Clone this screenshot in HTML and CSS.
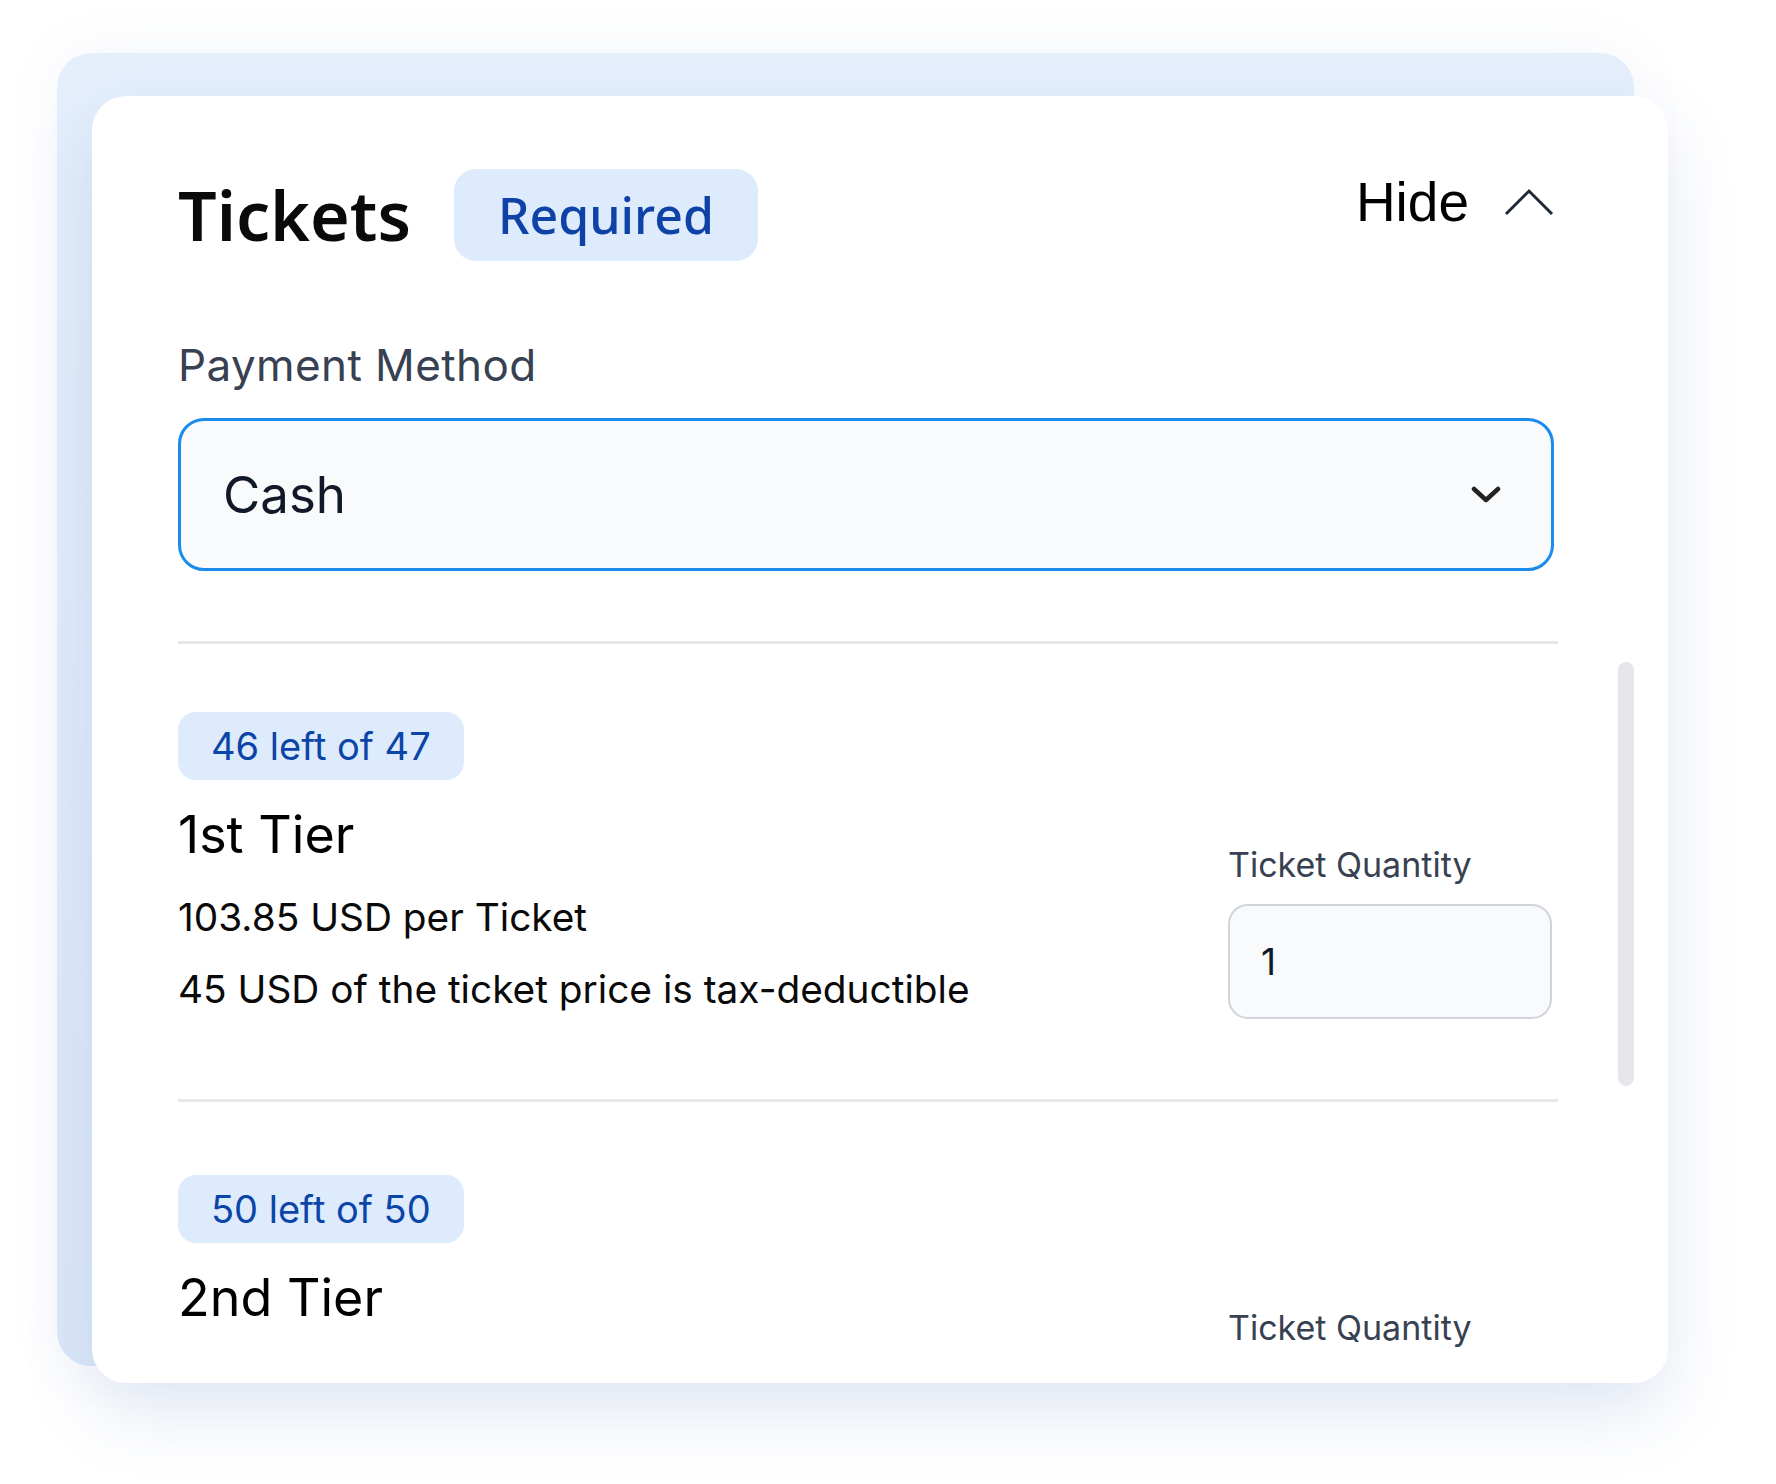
FILE: index.html
```html
<!DOCTYPE html>
<html lang="en">
<head>
<meta charset="utf-8">
<title>Tickets</title>
<link rel="stylesheet" href="styles.css">
</head>
<body>
<div class="stage">
  <div class="back-card">
    <section class="card">
      <header class="card-header">
        <div class="title-group">
          <h1 class="title">Tickets</h1>
          <span class="pill">Required</span>
        </div>
        <button class="hide-btn" type="button">
          <span>Hide</span>
          <svg class="chev-up" viewBox="0 0 50 28" width="50" height="28"><polyline points="2,26 25,3 48,26" fill="none" stroke="#1f2937" stroke-width="3"/></svg>
        </button>
      </header>

      <label class="field-label">Payment Method</label>
      <div class="select">
        <span class="select-value">Cash</span>
        <svg class="chev-down" viewBox="0 0 30 18" width="30" height="18"><polyline points="3,3 15,14 27,3" fill="none" stroke="#222" stroke-width="4.5" stroke-linecap="round" stroke-linejoin="round"/></svg>
      </div>

      <div class="divider"></div>

      <div class="tiers">
        <div class="tier">
          <div class="tier-info">
            <span class="badge">46 left of 47</span>
            <h2 class="tier-name">1st Tier</h2>
            <p class="tier-line">103.85 USD per Ticket</p>
            <p class="tier-line">45 USD of the ticket price is tax-deductible</p>
          </div>
          <div class="qty">
            <div class="qty-label">Ticket Quantity</div>
            <div class="qty-input">1</div>
          </div>
        </div>
        <div class="tier tier-next">
          <div class="tier-info">
            <span class="badge">50 left of 50</span>
            <h2 class="tier-name">2nd Tier</h2>
          </div>
          <div class="qty">
            <div class="qty-label">Ticket Quantity</div>
          </div>
        </div>
      </div>

      <div class="scroll-thumb"></div>
    </section>
  </div>
</div>
</body>
</html>
```

FILE: styles.css
```css
* { box-sizing: border-box; }

html, body {
  margin: 0;
  padding: 0;
  background: #ffffff;
}

body {
  width: 1776px;
  height: 1484px;
  overflow: hidden;
  font-family: "Inter", "Noto Sans", sans-serif;
}

.stage {
  padding: 53px 0 0 57px;
}

.back-card {
  width: 1577px;
  height: 1313px;
  border-radius: 34px;
  background: linear-gradient(180deg, #e5effc 0%, #dce8f8 100%);
  padding: 43px 0 0 35px;
  box-shadow: 0 0 60px rgba(60, 100, 180, 0.06);
}

.card {
  position: relative;
  width: 1576px;
  height: 1287px;
  background: #ffffff;
  border-radius: 34px;
  overflow: hidden;
  padding: 73px 114px 0 86px;
  box-shadow: 0 30px 70px rgba(50, 90, 170, 0.14);
}

.card-header {
  display: flex;
  justify-content: space-between;
  align-items: flex-start;
}

.title-group {
  display: flex;
  align-items: center;
  gap: 43px;
}

.title {
  margin: 0;
  font-family: "Noto Sans", sans-serif;
  font-weight: 600;
  font-size: 68px;
  line-height: 1;
  color: #0a0a0a;
}

.pill {
  display: inline-block;
  height: 92px;
  padding: 0 44px;
  border-radius: 22px;
  background: #deebfd;
  color: #0e42a6;
  font-family: "Noto Sans", sans-serif;
  font-weight: 500;
  font-size: 50px;
  line-height: 92px;
}

.hide-btn {
  margin-top: 7px;
  display: flex;
  align-items: center;
  gap: 35px;
  border: 0;
  padding: 0;
  background: transparent;
  font-family: "Liberation Sans", Arial, sans-serif;
  font-size: 55px;
  line-height: 52px;
  color: #000;
}

.chev-up { display: block; width: 50px; height: 28px; }

.field-label {
  display: block;
  margin-top: 78px;
  font-size: 44px;
  line-height: 53px;
  color: #374151;
  letter-spacing: 0.4px;
}

.select {
  margin-top: 26px;
  height: 153px;
  border: 3px solid #1b8cec;
  border-radius: 26px;
  background: #f9fafb;
  display: flex;
  align-items: center;
  justify-content: space-between;
  padding: 0 50px 0 42px;
}

.select-value {
  font-size: 51px;
  color: #111827;
  line-height: 1;
}

.chev-down { display: block; width: 30px; height: 18px; }

.divider {
  margin-top: 70px;
  height: 3px;
  background: #e5e7eb;
  margin-right: -4px;
}

.tier {
  display: flex;
  justify-content: space-between;
  align-items: flex-start;
  padding: 68px 0 80px;
  border-bottom: 3px solid #e5e7eb;
  margin-right: -4px;
}

.tier-next {
  padding-top: 73px;
  border-bottom: 0;
}

.tier-info {
  display: flex;
  flex-direction: column;
  align-items: flex-start;
}

.badge {
  display: inline-block;
  height: 68px;
  padding: 0 33px;
  border-radius: 18px;
  background: #deebfd;
  color: #0b45a8;
  font-size: 38px;
  line-height: 68px;
}

.tier-name {
  margin: 24px 0 0;
  font-size: 52px;
  font-weight: 400;
  line-height: 62px;
  color: #000;
}

.tier-line {
  margin: 28px 0 0;
  font-size: 38.8px;
  line-height: 46px;
  color: #0a0a0a;
}

.tier-line + .tier-line { margin-top: 26px; }

.qty {
  width: 324px;
  margin-right: 6px;
  margin-top: 132px;
}

.qty-label {
  font-size: 34px;
  line-height: 41px;
  color: #374151;
}

.qty-input {
  margin-top: 19px;
  width: 324px;
  height: 115px;
  border: 2px solid #d1d5db;
  border-radius: 20px;
  background: #f9fafb;
  padding-left: 31px;
  display: flex;
  align-items: center;
  font-size: 37px;
  color: #111827;
}

.scroll-thumb {
  position: absolute;
  top: 566px;
  right: 34px;
  width: 16px;
  height: 424px;
  border-radius: 8px;
  background: #e5e7eb;
}
```
